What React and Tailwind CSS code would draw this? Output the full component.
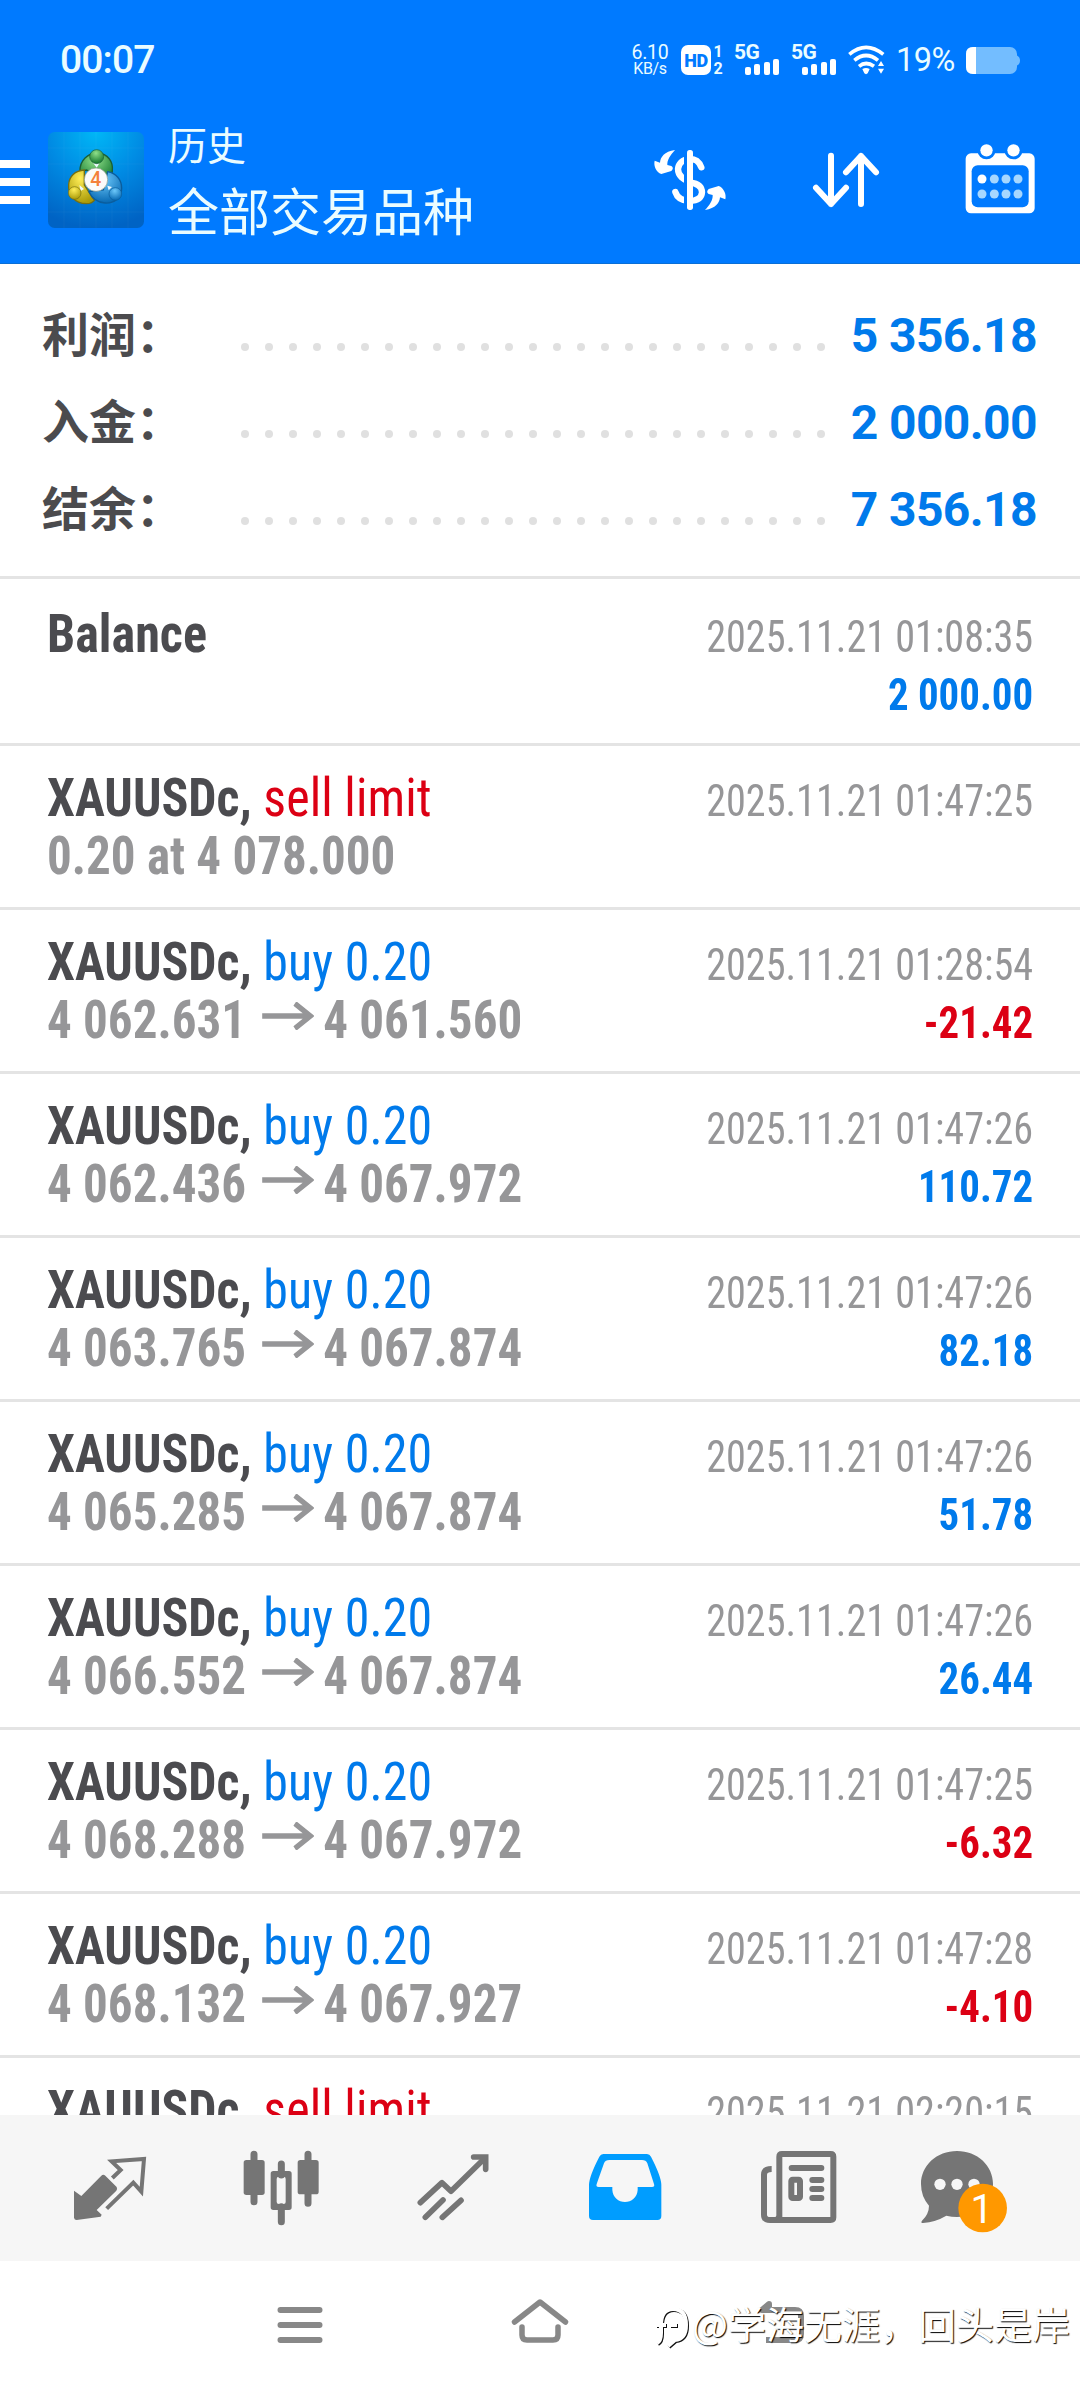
import { clsx } from "clsx";

const summary = [
  { label: "利润：", value: "5 356.18" },
  { label: "入金：", value: "2 000.00" },
  { label: "结余：", value: "7 356.18" },
];

const history = [
  { kind: "balance", time: "2025.11.21 01:08:35", amount: "2 000.00" },
  { kind: "limit", side: "sell limit", detail: "0.20 at 4 078.000", time: "2025.11.21 01:47:25" },
  { side: "buy 0.20", open: "4 062.631", close: "4 061.560", time: "2025.11.21 01:28:54", amount: "-21.42" },
  { side: "buy 0.20", open: "4 062.436", close: "4 067.972", time: "2025.11.21 01:47:26", amount: "110.72" },
  { side: "buy 0.20", open: "4 063.765", close: "4 067.874", time: "2025.11.21 01:47:26", amount: "82.18" },
  { side: "buy 0.20", open: "4 065.285", close: "4 067.874", time: "2025.11.21 01:47:26", amount: "51.78" },
  { side: "buy 0.20", open: "4 066.552", close: "4 067.874", time: "2025.11.21 01:47:26", amount: "26.44" },
  { side: "buy 0.20", open: "4 068.288", close: "4 067.972", time: "2025.11.21 01:47:25", amount: "-6.32" },
  { side: "buy 0.20", open: "4 068.132", close: "4 067.927", time: "2025.11.21 01:47:28", amount: "-4.10" },
  { kind: "limit", side: "sell limit", detail: "0.20 at 4 078.000", time: "2025.11.21 02:20:15" },
];

function Signal() {
  return (
    <div className="flex h-[30px] w-[45px] flex-col">
      <span className="h-[14px] text-[21px] leading-[15px] font-bold tracking-[-0.6px]">5G</span>
      <div className="flex h-[16px] items-end justify-end gap-[3.5px]">
        <i className="h-2 w-[6px] rounded-[2px] bg-white" />
        <i className="h-[11px] w-[6px] rounded-[2px] bg-white" />
        <i className="h-[13px] w-[6px] rounded-[2px] bg-white" />
        <i className="h-[16px] w-[6px] rounded-[2px] bg-white" />
      </div>
    </div>
  );
}

function StatusBar() {
  return (
    <div className="flex h-[120px] items-center pr-[60px] pl-[60px] font-[Roboto,sans-serif] text-[#eafcff]">
      <span className="text-[39px] leading-[40px] font-medium tracking-[-0.9px]">00:07</span>
      <div className="ml-auto flex items-center">
        <div className="flex w-[36px] flex-col items-center text-[19.5px] leading-[17px] tracking-[-0.3px]">
          <span>6.10</span>
          <span className="text-[16px] leading-[16px]">KB/s</span>
        </div>
        <div className="ml-[13px] flex h-[30px] w-[30px] items-center justify-center rounded-[7px] bg-white text-[18px] font-black tracking-[-0.5px] text-[#007aff]">
          HD
        </div>
        <div className="ml-[2px] flex w-[10px] flex-col items-center text-[16px] leading-[17px] font-bold">
          <span>1</span>
          <span>2</span>
        </div>
        <div className="ml-[11px]"><Signal /></div>
        <div className="ml-[12px]"><Signal /></div>
        <svg className="ml-[12px] h-[30px] w-[37px]" viewBox="744 133 111 90" fill="none" stroke="#fff" strokeWidth="11">
          <path d="M748 161Q798 119 850 161" />
          <path d="M763 179Q798 150 834 179" />
          <path d="M777 197Q798 180 822 197" />
          <path d="M787 205Q798 199 809 205L803 218Q798 223 793 218Z" fill="#fff" stroke="none" />
          <path d="M843 181L852 196H834ZM834 204H852L843 219Z" fill="#fff" stroke="none" />
        </svg>
        <span className="ml-[11px] w-[60px] text-[32.5px] leading-[34px] tracking-[-0.5px]">19%</span>
        <svg className="ml-[10px] h-[27px] w-[54px]" viewBox="0 0 54 27">
          <rect width="51" height="27" rx="7" fill="#73bdff" />
          <path d="M51 8.5q3 1.500 3 5t-3 5z" fill="#73bdff" />
          <path d="M10 0H7Q0 0 0 7v13q0 7 7 7h3z" fill="#fff" />
        </svg>
      </div>
    </div>
  );
}

function AppLogo() {
  return (
    <svg className="ml-[18px] h-[96px] w-[96px]" viewBox="24 21 288 288">
      <defs>
        <radialGradient id="plate" cx="50%" cy="0%" r="100%">
          <stop offset="0" stopColor="#00b7f6" />
          <stop offset="0.5" stopColor="#008ae3" />
          <stop offset="1" stopColor="#0063c4" />
        </radialGradient>
        <radialGradient id="green" cx="45%" cy="25%" r="75%">
          <stop offset="0" stopColor="#8fe08a" />
          <stop offset="1" stopColor="#12762d" />
        </radialGradient>
        <radialGradient id="yellow" cx="45%" cy="25%" r="75%">
          <stop offset="0" stopColor="#ffee58" />
          <stop offset="1" stopColor="#a99a08" />
        </radialGradient>
        <radialGradient id="blue" cx="45%" cy="25%" r="75%">
          <stop offset="0" stopColor="#6cc8fa" />
          <stop offset="1" stopColor="#0769b3" />
        </radialGradient>
      </defs>
      <rect x="24" y="21" width="288" height="288" rx="20" fill="url(#plate)" />
      <path d="M72 21V309M120 21V309M168 21V309M216 21V309M264 21V309M24 69H312M24 117H312M24 261H312" stroke="#fff" strokeOpacity="0.05" strokeWidth="2" />
      <path d="M120 140C118 105 145 84 172 84C204 86 220 110 217 138C216 155 208 168 198 172L140 135Z" fill="url(#green)" stroke="#1a5f35" strokeWidth="4" />
      <path d="M133 135C104 137 88 155 86 178C84 205 100 236 140 236C150 236 158 232 163 226L133 180Z" fill="url(#yellow)" stroke="#776f10" strokeWidth="4" />
      <path d="M203 140C228 145 245 163 245 190C245 218 222 236 195 234C172 232 155 218 147 200L190 195Z" fill="url(#blue)" stroke="#0b5d9c" strokeWidth="4" />
      <path d="M158 112L180 112L170 128ZM118 180L132 192L122 198ZM202 182L216 186L206 196Z" fill="#eefaff" />
      <circle cx="170" cy="95" r="21" fill="url(#green)" stroke="#1a5f35" strokeWidth="2" />
      <circle cx="104" cy="204" r="19" fill="url(#yellow)" stroke="#776f10" strokeWidth="2" />
      <circle cx="226" cy="207" r="19" fill="url(#blue)" stroke="#0b5d9c" strokeWidth="2" />
      <circle cx="168" cy="164" r="35" fill="#fbfbfa" stroke="#8a9a8a" strokeWidth="2" />
      <text x="167" y="184" textAnchor="middle" fontFamily="Roboto, sans-serif" fontSize="58" fontWeight="500" fill="#f4813a">4</text>
    </svg>
  );
}

function CurrencyIcon() {
  return (
    <svg className="h-[66px] w-[74px]" viewBox="159 441 222 198" fill="#fff">
      <path d="M304 502C296 482 286 477 270 477C246 478 235 493 234 507C234 528 250 538 270 547C298 551 306 562 306 577C305 594 290 602 268 603C244 602 231 592 226 576" fill="none" stroke="#fff" strokeWidth="19" strokeLinecap="round" />
      <path d="M252 445h9v190h-9z" fill="#007aff" />
      <rect x="261" y="450" width="18" height="180" rx="8" />
      <path d="M225 450C193 454 181 472 180 488L164 482C160 497 169 517 184 522L214 513Q223 504 214 498L202 495C201 480 211 465 225 450Z" />
      <path d="M225 450C193 454 181 472 180 488L164 482C160 497 169 517 184 522L214 513Q223 504 214 498L202 495C201 480 211 465 225 450Z" transform="rotate(180 270 540)" />
    </svg>
  );
}

function SortIcon() {
  return (
    <svg className="h-[66px] w-[72px]" viewBox="630 441 216 198" fill="none" stroke="#fff" strokeWidth="18" strokeLinecap="round" strokeLinejoin="round">
      <path d="M693 467V612M648 563L693 612L738 563" />
      <path d="M783 612V468M738 517L783 468L828 517" />
    </svg>
  );
}

function CalendarIcon() {
  return (
    <svg className="h-[72px] w-[72px]" viewBox="1093 431 216 216" fill="#fff">
      <rect x="1098" y="459" width="207" height="180" rx="16" />
      <rect x="1116" y="495" width="171" height="126" rx="18" fill="#007aff" />
      <circle cx="1160.500" cy="450" r="27" fill="#007aff" />
      <circle cx="1241.500" cy="450" r="27" fill="#007aff" />
      <circle cx="1160.500" cy="450" r="18.500" />
      <circle cx="1241.500" cy="450" r="18.500" />
      {[536, 581].map((y) =>
        [1147, 1184, 1219, 1255].map((x) => (
          <circle key={`${x}-${y}`} cx={x} cy={y} r="13.500" fill={x === 1147 && y === 536 ? "#fff" : "#a6d7ff"} />
        ))
      )}
    </svg>
  );
}

function Header() {
  return (
    <header className="h-[264px] border-b border-[#0a6fd6] bg-[#007aff]">
      <StatusBar />
      <div className="flex h-[120px] items-center">
        <div className="mt-1 flex w-[30px] flex-col gap-[10px]">
          <i className="h-2 bg-white" />
          <i className="h-2 bg-white" />
          <i className="h-2 bg-white" />
        </div>
        <AppLogo />
        <div className="ml-[24px] flex flex-col font-['Noto_Sans_CJK_SC',sans-serif] text-[#eafcff]">
          <span className="text-[39px] leading-[50px]">历史</span>
          <span className="mt-2 text-[51px] leading-[66px]">全部交易品种</span>
        </div>
        <div className="mr-[44px] ml-auto flex items-center">
          <CurrencyIcon />
          <div className="ml-[83px]"><SortIcon /></div>
          <div className="ml-[82px]"><CalendarIcon /></div>
        </div>
      </div>
    </header>
  );
}

function Summary() {
  return (
    <section className="h-[315px] border-b-[3px] border-[#e4e4e4] pt-[28px] pr-[43px] pl-[42px]">
      {summary.map(({ label, value }) => (
        <div key={label} className="flex h-[87px] items-center">
          <span className="-mt-[8px] w-[199px] font-['Noto_Sans_CJK_SC',sans-serif] text-[47px] leading-[69px] font-semibold text-[#4b4b4e]">{label}</span>
          <div className="mt-[22px] flex gap-4">
            {Array.from({ length: 25 }, (_, i) => (
              <i key={i} className="h-2 w-2 rounded-full bg-[#e0e0e0]" />
            ))}
          </div>
          <span className="ml-auto font-[Roboto,sans-serif] text-[48px] font-bold tracking-[-0.6px] text-[#007aeb]">{value}</span>
        </div>
      ))}
    </section>
  );
}

function Arrow() {
  return (
    <svg className="mr-[10px] ml-[17px] inline-block h-[28px] w-[58px] align-[8px]" viewBox="0 0 58 28" fill="none" stroke="currentColor" strokeWidth="5.500">
      <path d="M1 14H54M37 1.500L54 14L37 26.500" />
    </svg>
  );
}

function HistoryRow({ item, first }) {
  const { kind, side, detail, open, close, time, amount } = item;
  return (
    <li
      className={clsx(
        "flex shrink-0 justify-between border-b-[3px] border-[#e4e4e4] pr-[47px] pl-[47px] font-['Roboto_Condensed',Roboto,sans-serif]",
        first ? "h-[167px] pt-[26px]" : "h-[164px] pt-[23px]"
      )}
    >
      <div className="text-[54px] leading-[58px] font-bold whitespace-nowrap text-[#4b4b4f]">
        {kind === "balance" ? (
          <p className="origin-left scale-x-[0.93]">Balance</p>
        ) : (
          <>
            <p className="origin-left scale-x-[0.925]">
              XAUUSDc,{" "}
              <span className={clsx("font-[440] tracking-[0.1px]", side.startsWith("sell") ? "text-[#dc0014]" : "text-[#007aeb]")}>{side}</span>
            </p>
            <p className="origin-left scale-x-[0.908] text-[#969698]">
              {detail}
              {open && (
                <>
                  {open}
                  <Arrow />
                  {close}
                </>
              )}
            </p>
          </>
        )}
      </div>
      <div className="pt-[3px] text-right text-[45px] leading-[58px] whitespace-nowrap">
        <p className="origin-right scale-x-[0.893] font-[430] text-[#969698]">{time}</p>
        {amount && (
          <p className={clsx("origin-right scale-x-[0.908] font-bold", amount.startsWith("-") ? "text-[#dc0014]" : "text-[#007aeb]")}>{amount}</p>
        )}
      </div>
    </li>
  );
}

function TabBar() {
  return (
    <nav className="flex h-[146px] shrink-0 bg-[#f6f6f6] pt-[25px] text-[#757575]">
      {/* quotes */}
      <svg className="ml-[65px] h-[100px] w-[90px]" viewBox="15 0 270 300" fill="currentColor">
        <path d="M42 152L64 168L124 107Q130 102 136 107L170 141Q173 147 169 152L110 210L125 224L122 230L50 240Q43 240 42 233Z" />
        <path d="M157 114L182 90L155 64L252 57L244 155L220 128L140 206" fill="none" stroke="currentColor" strokeWidth="12" />
      </svg>
      {/* chart */}
      <svg className="ml-[81px] h-[100px] w-[90px]" viewBox="529 0 270 300" fill="currentColor">
        <path d="M583 43V185M745 43V190M665 72V105M665 200V245" stroke="currentColor" strokeWidth="21" strokeLinecap="round" />
        <rect x="552" y="60" width="63" height="105" rx="8" />
        <rect x="714" y="60" width="63" height="103" rx="8" />
        <path fillRule="evenodd" d="M641 93H688Q696 93 696 101V202Q696 210 688 210H641Q633 210 633 202V101Q633 93 641 93ZM658 110Q651 110 651 117V186Q651 192 658 192H672Q678 192 678 186V117Q678 110 672 110Z" />
      </svg>
      {/* trade */}
      <svg className="ml-[82px] h-[100px] w-[90px]" viewBox="1045 0 270 300" fill="none" stroke="currentColor" strokeWidth="17" strokeLinecap="round" strokeLinejoin="round">
        <path d="M1082 188L1147 128L1174 154L1276 54" />
        <path d="M1242 51H1278V88" strokeLinejoin="miter" />
        <path d="M1097 232L1150 180M1148 232L1204 181" />
      </svg>
      {/* history */}
      <svg className="ml-[82px] h-[100px] w-[90px]" viewBox="4 0 270 300">
        <path fill="#009dff" fillRule="evenodd" d="M74 42H205Q213 42 217 50Q248 110 248 135V228Q248 240 236 240H43Q31 240 31 228V135Q31 110 62 50Q66 42 74 42ZM92 60Q80 60 76 70L54 132Q51 141 60 141H101V150C102 172 120 186 139 186C158 186 176 172 177 150V141H220Q229 141 226 132L206 70Q202 60 190 60Z" />
      </svg>
      {/* news */}
      <svg className="ml-[84px] h-[100px] w-[90px]" viewBox="526 0 270 300" fill="none" stroke="currentColor" strokeWidth="18">
        <path d="M602 240V50Q602 42 610 42H756Q764 42 764 50V232Q764 240 756 240H574Q556 240 556 224V104Q556 87 579 87" />
        <path d="M587 240L602 225" strokeWidth="8" />
        <path d="M639 84H728M701 120H728M701 147H728M701 174H728" strokeLinecap="round" />
        <rect x="638" y="119" width="26" height="55" rx="4" />
      </svg>
      {/* messages */}
      <svg className="ml-[66px] h-[100px] w-[108px]" viewBox="993 0 324 300">
        <path fill="currentColor" d="M1134 33C1195 33 1242 77 1242 132C1242 188 1195 231 1134 231Q1118 231 1102 227Q1070 246 1032 249Q1024 249 1029 242Q1050 222 1050 197Q1026 170 1026 132C1026 77 1073 33 1134 33Z" />
        <g fill="#f6f6f6">
          <circle cx="1083" cy="133" r="17" />
          <circle cx="1134" cy="133" r="17" />
          <circle cx="1185" cy="133" r="17" />
        </g>
        <circle cx="1211" cy="204" r="73" fill="#ff9800" />
        <text x="1208" y="249" textAnchor="middle" fontFamily="Roboto, sans-serif" fontSize="120" fill="#fff">1</text>
      </svg>
    </nav>
  );
}

function SystemNav() {
  return (
    <div className="relative flex h-[127px] shrink-0 items-start bg-white pt-[33px] text-[#888]">
      <svg className="ml-[270px] h-[60px] w-[60px]" viewBox="0 0 60 60" stroke="currentColor" strokeWidth="6" strokeLinecap="round">
        <path d="M10.500 16H49.500M10.500 31H49.500M10.500 46H49.500" />
      </svg>
      <svg className="ml-[180px] h-[60px] w-[60px]" viewBox="0 0 60 60" fill="none" stroke="currentColor" strokeWidth="5.500" strokeLinecap="round" strokeLinejoin="round">
        <path d="M4.500 28L30 8L55.500 28" />
        <path d="M12 33V41Q12 46 17 46H43Q48 46 48 41V33" />
      </svg>
      <svg className="ml-[180px] h-[60px] w-[60px]" viewBox="0 0 60 60" fill="none" stroke="currentColor" strokeWidth="6" strokeLinejoin="round">
        <path d="M16 16H45Q51 16 51 22V40Q51 46 45 46H16" />
        <path d="M19 10L12 16H19Z" fill="currentColor" />
      </svg>
      {/* watermark lies over the navigation keys */}
      <div className="absolute top-[36px] right-[10px] flex items-center font-['Noto_Sans_CJK_SC',sans-serif] text-[38px] leading-[44px] whitespace-nowrap text-white [text-shadow:1px_1px_1px_#000]">
        <svg className="mt-1 mr-px h-[48px] w-[38px] [filter:drop-shadow(1px_1px_0.5px_#111)]" viewBox="0 0 38 48" fill="none" stroke="#fff" strokeWidth="4">
          <path d="M4 42Q8 40 8 32V24M3 24H13M8 24Q8 8 20 8Q33 8 33 24Q33 38 22 39L15 45" />
          <path d="M17 24H24" />
        </svg>
        <span>@学海无涯，回头是岸</span>
      </div>
    </div>
  );
}

export default function App() {
  return (
    <div className="flex h-[2388px] w-[1080px] flex-col overflow-hidden bg-white">
      <Header />
      <Summary />
      <ul className="flex min-h-0 flex-1 flex-col overflow-hidden">
        {history.map((item, i) => (
          <HistoryRow key={i} item={item} first={i === 0} />
        ))}
      </ul>
      <TabBar />
      <SystemNav />
    </div>
  );
}
